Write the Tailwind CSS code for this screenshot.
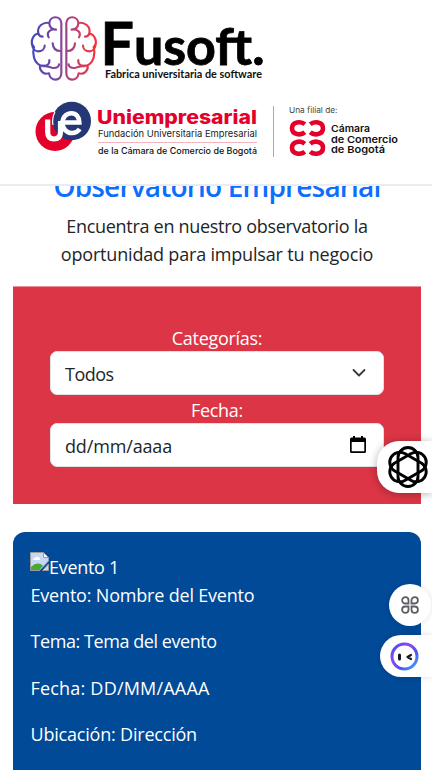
<!DOCTYPE html>
<html lang="es">
<head>
<meta charset="utf-8">
<meta name="viewport" content="width=device-width, initial-scale=1">
<title>Observatorio Empresarial</title>
<script src="https://cdn.jsdelivr.net/npm/@tailwindcss/browser@4"></script>
</head>
<body class="relative h-[770px] w-[432px] overflow-hidden bg-white font-['Open_Sans','Noto_Sans',sans-serif] text-[18px] leading-7 tracking-[-0.3px] text-[#212529]">

<header class="absolute inset-x-0 top-0 z-10 h-[186px] border-b-2 border-[#ebebf0] bg-white">
  <svg class="block" width="432" height="184" viewBox="0 0 432 184">
    <defs>
      <linearGradient id="brain" gradientUnits="userSpaceOnUse" x1="33" y1="0" x2="231" y2="0">
        <stop offset="0" stop-color="#3f48bd"/><stop offset=".5" stop-color="#944493"/><stop offset=".75" stop-color="#cf3e60"/><stop offset="1" stop-color="#fb2f38"/>
      </linearGradient>
    </defs>
    <g transform="translate(20 5) scale(.3333)" fill="none" stroke="url(#brain)" stroke-width="6.5" stroke-linecap="round" stroke-linejoin="round">
      <path d="M124 55C124 30 89 32 88 54C70 50 50 64 55 85C38 90 28 112 42 126C36 146 42 172 60 181C58 198 72 210 87 205C91 231 124 229 124 205ZM88 54C88 65 95 73 108 74C91 71 78 82 86 97M55 85C57 92 62 95 68 95M36 118C38 134 48 139 54 139C66 139 74 132 74 122M98 115C99 129 107 138 122 138M60 181C76 187 90 180 88 165M60 181C82 181 91 189 100 189C111 189 117 185 117 178"/>
      <path d="M139 55C139 30 174 32 175 54C193 50 213 64 208 85C225 90 235 112 221 126C227 146 221 172 203 181C205 198 191 210 176 205C172 231 139 229 139 205ZM175 54C175 65 168 73 155 74C172 71 185 82 177 97M208 85C206 92 201 95 195 95M227 118C225 134 215 139 209 139C197 139 189 132 189 122M165 115C164 129 156 138 141 138M203 181C187 187 173 180 175 165M203 181C181 181 172 189 163 189C152 189 146 185 146 178"/>
    </g>
    <text x="100.500" y="65" font-family="Lato, sans-serif" font-weight="700" fill="#000" stroke="#000" stroke-width=".8" letter-spacing="0" textLength="164" lengthAdjust="spacingAndGlyphs"><tspan font-size="59">F</tspan><tspan font-size="52">usoft.</tspan></text>
    <text x="105" y="78" font-family="Lato, sans-serif" font-size="10.500" font-weight="700" letter-spacing="0" fill="#111" textLength="157" lengthAdjust="spacingAndGlyphs">Fabrica universitaria de software</text>
    <circle cx="55" cy="131.500" r="19.500" fill="#e4002b"/>
    <circle cx="71.700" cy="121" r="19.300" fill="#263775"/>
    <path d="M55 112A19.300 19.300 0 0 0 53 125" fill="none" stroke="#fff" stroke-width="1.200"/>
    <path d="M53 125A19.300 19.300 0 0 0 64 138.700L60 139L50 134Z" fill="#e4002b"/>
    <path d="M47.700 119.500V132Q47.700 139 54 139Q60.500 139 60.500 132V121" fill="none" stroke="#fff" stroke-width="5.200"/>
    <path d="M64 122.500H79.300C79 116.500 76 113.200 71.500 113.200C66 113.200 62.500 117.500 62.500 123C62.500 128.500 66.500 133 72 133C75 133 78 131.500 79.700 129" fill="none" stroke="#fff" stroke-width="4.600"/>
    <g font-family="Inter, sans-serif" letter-spacing="0">
      <text x="97" y="123.500" font-size="19" font-weight="800" fill="#e4002b" textLength="160" lengthAdjust="spacingAndGlyphs">Uniempresarial</text>
      <text x="98" y="136.500" font-size="9.500" fill="#222" textLength="159" lengthAdjust="spacingAndGlyphs">Fundación Universitaria Empresarial</text>
      <text x="98" y="153.500" font-size="9" font-weight="500" fill="#111" textLength="159" lengthAdjust="spacingAndGlyphs">de la Cámara de Comercio de Bogotá</text>
      <text x="289" y="113" font-size="8" fill="#444" textLength="48.500" lengthAdjust="spacingAndGlyphs">Una filial de:</text>
      <g font-size="9.500" font-weight="600" fill="#111">
        <text x="331" y="131.500" textLength="39" lengthAdjust="spacingAndGlyphs">Cámara</text>
        <text x="331" y="142.500" textLength="67" lengthAdjust="spacingAndGlyphs">de Comercio</text>
        <text x="331" y="153" textLength="54" lengthAdjust="spacingAndGlyphs">de Bogotá</text>
      </g>
    </g>
    <path d="M98 142.500H257" stroke="#f5b5bf"/>
    <path d="M273.500 106V157" stroke="#aaa"/>
    <g fill="none" stroke="#e4002b" stroke-width="4.600">
      <path d="M304.800 124.300C301 121 292 121.500 292 128.300C292 135 301 135.700 304.800 132.300M310.200 124.300C314 121 323 121.500 323 128.300C323 135 314 135.700 310.200 132.300M304.800 143.700C301 140.400 292 140.900 292 147.700C292 154.400 301 155.100 304.800 151.700M310.200 143.700C314 140.400 323 140.900 323 147.700C323 154.400 314 155.100 310.200 151.700"/>
    </g>
  </svg>
</header>

<main class="pt-[168px] pr-[11px] pl-[13px]">
  <h1 class="h-[44px] text-center text-[28px] font-semibold leading-[36px] tracking-[-0.82px] text-[#0d6efd]">Observatorio Empresarial</h1>
  <p class="text-center">Encuentra en nuestro observatorio la<br><span class="tracking-[-0.19px]">oportunidad para impulsar tu negocio</span></p>

  <section class="mt-[18px] flex h-[218px] flex-col border-t border-[#ea8f98] bg-[#dc3545] px-[37px] pt-[37px] text-center text-white">
    <label>Categorías:</label>
    <div class="mt-[-1px] flex h-[44px] items-center justify-between rounded-[7px] border border-[#dee2e6] bg-white pr-[17px] pl-[14px] text-[#212529]">
      <span class="pt-0.5 tracking-[-0.5px]">Todos</span>
      <svg width="14" height="14" viewBox="0 0 14 14" fill="none" stroke="#343a40" stroke-width="1.800" stroke-linecap="round" stroke-linejoin="round"><path d="M1.500 4L7 9.500L12.500 4"/></svg>
    </div>
    <label class="pt-px">Fecha:</label>
    <div class="mt-[-1px] flex h-[44px] items-center justify-between rounded-[7px] border border-[#dee2e6] bg-white pr-[17px] pl-[14px] text-[#212529]">
      <span class="pt-0.5 tracking-[-0.15px]">dd/mm/aaaa</span>
      <svg width="16" height="18" viewBox="0 0 16 18"><path fill="#000" fill-rule="evenodd" d="M3 0H5V1.500H11V0H13V1.500H14.500Q16 1.500 16 3V15.500Q16 17 14.500 17H1.500Q0 17 0 15.500V3Q0 1.500 1.500 1.500H3ZM1.700 6V15.300H14.300V6Z"/></svg>
    </div>
  </section>

  <article class="mt-7 h-[250px] rounded-t-[12px] bg-[#004a98] pr-[17px] pl-[17.500px] pt-5 text-white">
    <div class="flex h-[29px] items-start">
      <svg class="-ml-[0.500px]" width="19" height="19" viewBox="0 0 19 19">
        <path d="M.5.500H13.500L18.500 5.500V9L9.500 18.500H.5Z" fill="#c6d8f5" stroke="#9b9b9b"/>
        <path d="M1 18V15Q7 9 13 13.500L9.500 18Z" fill="#4ba832"/>
        <path d="M3 8Q3 6 5 6Q6 3.500 8 5Q10 5 10 8Z" fill="#fff"/>
        <path d="M13.500 .5V5.500H18.500Z" fill="#fff" stroke="#9b9b9b"/>
        <path d="M18.500 12V18.500H12.500Z" fill="#c6d8f5" stroke="#9b9b9b"/>
      </svg>
      <span class="pt-px">Evento 1</span>
    </div>
    <div class="space-y-[18.300px]">
      <p class="tracking-[-0.19px]">Evento: Nombre del Evento</p>
      <p class="tracking-[-0.43px]">Tema: Tema del evento</p>
      <p class="tracking-[0.2px]">Fecha: DD/MM/AAAA</p>
      <p class="tracking-[-0.2px]">Ubicación: Dirección</p>
    </div>
  </article>
</main>

<div class="absolute top-[441px] right-0 z-20 h-[52px] w-[55px] rounded-l-[22px] bg-white shadow-[0_1px_8px_rgba(0,0,0,0.3)]">
  <svg class="mt-[4px] ml-[9px]" width="44" height="44" viewBox="-22 -22 44 44" fill="none" stroke="#000" stroke-width="2.900">
    <rect x="-10" y="-19.500" width="20" height="39" rx="10"/>
    <rect x="-10" y="-19.500" width="20" height="39" rx="10" transform="rotate(60)"/>
    <rect x="-10" y="-19.500" width="20" height="39" rx="10" transform="rotate(120)"/>
  </svg>
</div>
<div class="absolute top-[584px] left-[388.500px] z-20 flex h-[42px] w-[42px] items-center justify-center rounded-full bg-white shadow-[0_0_6px_rgba(0,0,0,0.12)]">
  <svg width="18" height="18" viewBox="0 0 18 18" fill="none" stroke="#5c5c63" stroke-width="1.800">
    <path d="M7.500 7.500H4.300A3.200 3.200 0 1 1 7.500 4.300ZM10.500 7.500V4.300A3.200 3.200 0 1 1 13.700 7.500ZM7.500 10.500V13.700A3.200 3.200 0 1 1 4.300 10.500ZM10.500 10.500H13.700A3.200 3.200 0 1 1 10.500 13.700Z"/>
  </svg>
</div>
<div class="absolute top-[635px] right-0 z-20 h-[42px] w-[52px] rounded-l-[21px] bg-white shadow-[0_0_6px_rgba(0,0,0,0.15)]">
  <svg class="mt-[7px] ml-[10px]" width="29" height="29" viewBox="0 0 29 29" fill="none">
    <defs><linearGradient id="ring" x1="0" y1="0" x2="1" y2="1"><stop offset="0" stop-color="#3d50f0"/><stop offset=".35" stop-color="#9245f5"/><stop offset=".65" stop-color="#5150ef"/><stop offset="1" stop-color="#35b9ff"/></linearGradient></defs>
    <circle cx="14.500" cy="14.500" r="12.500" stroke="url(#ring)" stroke-width="3"/>
    <path d="M9.500 13V17" stroke="#17171f" stroke-width="3" stroke-linecap="round"/>
    <path d="M21 13L17.500 15L21 17" stroke="#17171f" stroke-width="2.200" stroke-linecap="round" stroke-linejoin="round"/>
  </svg>
</div>
</body>
</html>
